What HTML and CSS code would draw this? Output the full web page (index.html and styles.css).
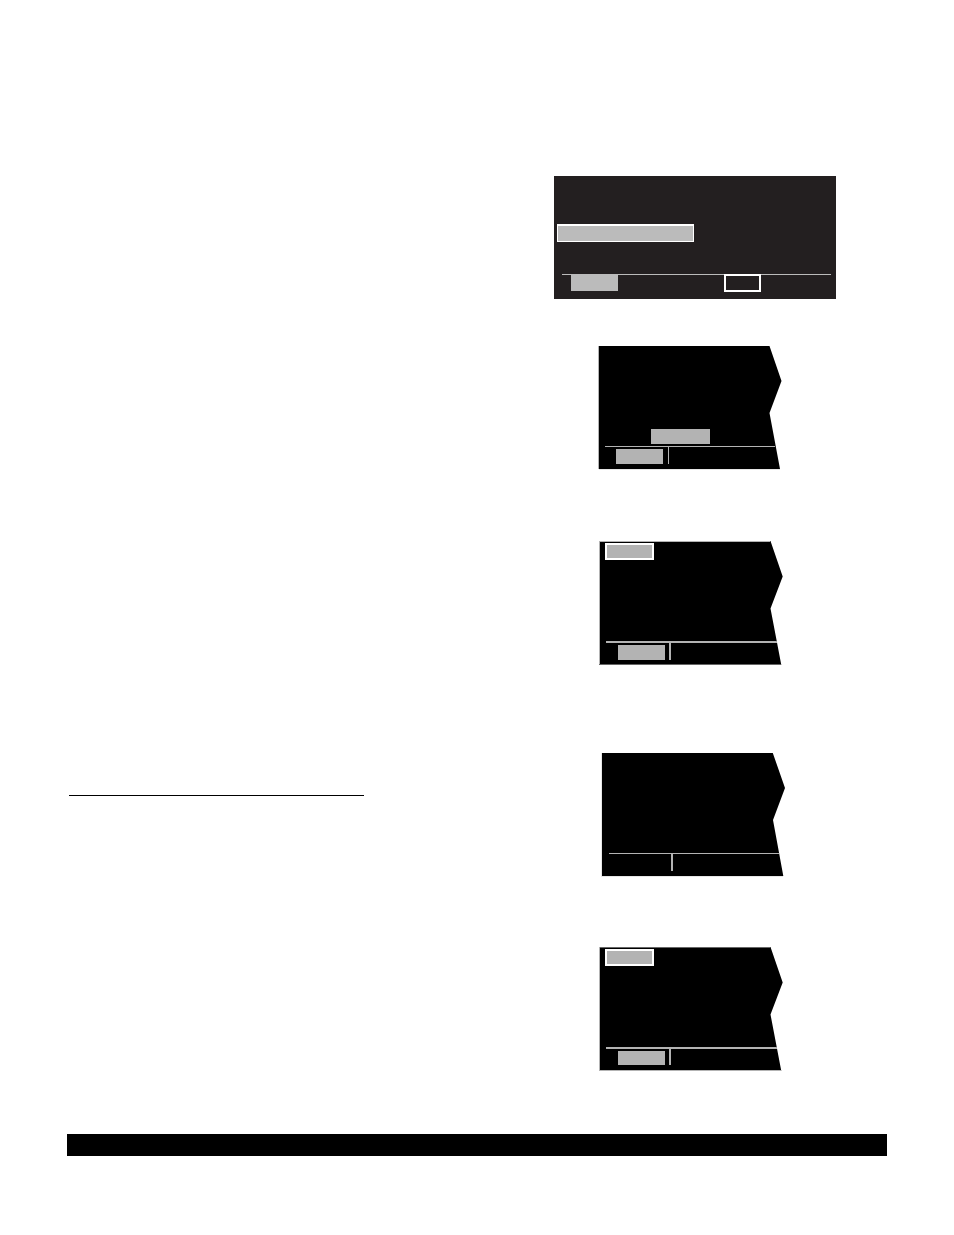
FILE: index.html
```html
<!DOCTYPE html>
<html lang="en">
<head>
<meta charset="utf-8">
<title>Display screens</title>
<link rel="stylesheet" href="styles.css">
</head>
<body>
<main class="page">
  <div class="content">
    <section class="notes">
      <hr class="rule">
    </section>
    <section class="screens">
      <svg class="screen-full" width="282" height="123" viewBox="0 0 282 123" shape-rendering="crispEdges" aria-hidden="true">
        <rect class="panel" width="282" height="123"/>
        <rect class="frame" x="3" y="48" width="137" height="18"/>
        <rect class="soft" x="4" y="50" width="135" height="15"/>
        <rect class="soft" x="8" y="98" width="269" height="1"/>
        <rect class="soft" x="17" y="98" width="47" height="17"/>
        <rect class="frame" x="170" y="98" width="37" height="18"/>
        <rect class="panel" x="172" y="100" width="33" height="14"/>
      </svg>
      <svg class="screen screen-select" width="188" height="124" viewBox="0 0 188 124" aria-hidden="true">
        <path class="torn" d="M1 0H171.5L183.5 35L171.5 67L182 123H1Z"/>
        <path class="key" d="M0 0h1v123h-1z"/>
        <path class="faint" d="M1 123h181v1h-181z"/>
        <path class="key" d="M53 83h59v15h-59zM7 100h170v1h-170zM18 103h47v15h-47zM70 101h1v17h-1z"/>
      </svg>
      <svg class="screen screen-entry" width="188" height="124" viewBox="0 0 188 124" aria-hidden="true">
        <path class="torn" d="M1 0H172.5L184.7 35.5L172.5 67.5L183.3 124H1Z"/>
        <path class="key" d="M1 0h171v1h-170v122h-1z"/>
        <path class="edge" d="M1 123h182v1h-182z"/>
        <path class="frame" d="M7 2h49v17h-49z"/>
        <path class="key" d="M9 4h45v13h-45zM8 100h170.8l.4 2h-171.2zM20 104h47v15h-47zM71 102h2v17h-2z"/>
      </svg>
      <svg class="screen screen-blank" width="188" height="124" viewBox="0 0 188 124" aria-hidden="true">
        <path class="torn" d="M4 0H174.8L187 35L175 67L185.3 123H4Z"/>
        <path class="faint" d="M3 0h1v123h181v1h-182z"/>
        <path class="key" d="M11 100h170v1h-170zM73 101h2v17h-2z"/>
      </svg>
      <svg class="screen screen-final" width="188" height="124" viewBox="0 0 188 124" aria-hidden="true">
        <path class="torn" d="M1 0H172.5L184.7 35.5L172.5 67.5L183.3 124H1Z"/>
        <path class="key" d="M1 0h1v123h-1z"/>
        <path class="edge" d="M2 0h170v1h-170z"/>
        <path class="key" d="M1 123h182v1h-182z"/>
        <path class="frame" d="M7 2h49v17h-49z"/>
        <path class="key" d="M9 4h45v13h-45zM8 100h170.8l.4 2h-171.2zM20 104h47v14h-47zM71 102h2v16h-2z"/>
      </svg>
    </section>
  </div>
  <footer class="footer-bar"></footer>
</main>
</body>
</html>
```

FILE: styles.css
```css
body {
  margin: 0;
  background: #fff;
  font-family: "Liberation Sans", sans-serif;
}

.page {
  padding: 176px 67px 79px;
}

.content {
  display: grid;
  grid-template-columns: 1fr 333px;
}

.rule {
  width: 295px;
  height: 1px;
  margin: 619px 0 0 2px;
  border: 0;
  background: #000;
}

.screens {
  display: flex;
  flex-direction: column;
  align-items: flex-start;
}

.screen {
  margin-left: 44px;
}

.screen-select {
  margin-top: 47px;
}

.screen-entry {
  margin-top: 71px;
}

.screen-blank {
  margin-top: 88px;
}

.screen-final {
  margin-top: 70px;
}

.panel {
  fill: #231f20;
}

.frame {
  fill: #fff;
}

.soft {
  fill: #bbb;
}

.torn {
  fill: #000;
}

.key {
  fill: #b3b3b3;
}

.edge {
  fill: #666;
}

.faint {
  fill: #e6e6e6;
}

.footer-bar {
  height: 22px;
  margin-top: 63px;
  background: #000;
}
```
